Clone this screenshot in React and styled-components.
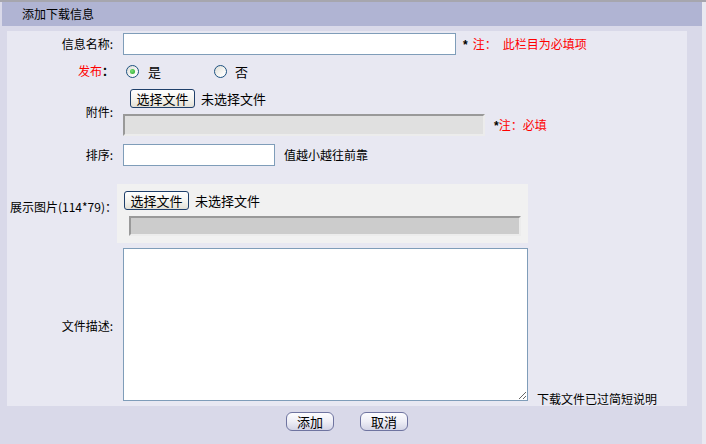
import React from "react";
import styled, { createGlobalStyle } from "styled-components";

const Global = createGlobalStyle`
  html, body { margin: 0; padding: 0; }
  body {
    background: #e9e9f1;
    font-family: "Noto Sans CJK SC", "Liberation Sans", sans-serif;
    font-size: 12px;
    color: #000;
  }
  * { box-sizing: border-box; }
`;

const Page = styled.div`
  width: 706px;
  height: 444px;
  border-top: 2px solid #a6a6ae;
  overflow: hidden;
`;

const Frame = styled.div`
  width: 702px;
  height: 442px;
  background: #d9d9e9;
`;

const Header = styled.div`
  margin-left: 2px;
  height: 24px;
  line-height: 24px;
  padding-left: 20px;
  background: #b0b4d3;
  font-size: 12px;
`;

const Inner = styled.div`
  margin: 5px 15px 0 7px;
  background: #e8e8f2;
  display: flex;
  flex-direction: column;
`;

const Row = styled.div`
  display: grid;
  grid-template-columns: 110px 411px 1fr;
  height: ${(p) => p.$h}px;
  margin-top: ${(p) => p.$mt || 0}px;
`;

const Label = styled.div`
  display: flex;
  align-items: ${(p) => (p.$top ? "flex-start" : "center")};
  justify-content: flex-end;
  padding-right: ${(p) => (p.$pr !== undefined ? p.$pr : 4)}px;
  padding-top: ${(p) => p.$pt || 0}px;
  white-space: nowrap;
  line-height: 16px;
`;

const Red = styled.span`
  color: #ff0000;
`;

const Colon = styled.span`
  font-weight: bold;
`;

const Value = styled.div`
  grid-column: ${(p) => (p.$span ? "2 / 4" : "2 / 3")};
  display: flex;
  flex-direction: ${(p) => (p.$col ? "column" : "row")};
  align-items: ${(p) => (p.$col ? "flex-start" : "center")};
  padding-left: 6px;
  padding-top: ${(p) => p.$pt || 0}px;
`;

const InlineLine = styled.div`
  display: flex;
  align-items: center;
`;

const ImageBox = styled.div`
  grid-column: 2 / 3;
  background: #f1f1f1;
  padding: 7px 0 0 7px;
  display: flex;
  flex-direction: column;
`;

const TextInput = styled.input`
  width: ${(p) => p.$w}px;
  height: 22px;
  border: 1px solid #7f9db9;
  background: #fff;
  padding: 0 3px;
  font-family: inherit;
  font-size: 12px;
  outline: none;
  margin: 0;
`;

const GrayInput = styled.div`
  width: ${(p) => p.$w}px;
  height: ${(p) => p.$h}px;
  margin-left: ${(p) => p.$ml || 0}px;
  background: ${(p) => p.$bg};
  border-style: solid;
  border-width: 2px;
  border-color: #999999 #ececec #ececec #999999;
`;

const Note = styled.span`
  margin-left: ${(p) => p.$ml || 0}px;
  white-space: nowrap;
  line-height: 16px;
`;

const Star = styled.span`
  font-weight: bold;
  font-family: "Liberation Sans", sans-serif;
  margin-right: ${(p) => p.$mr || 0}px;
`;

const Gap = styled.span`
  display: inline-block;
  width: 6px;
`;

const FileLine = styled.div`
  display: flex;
  align-items: center;
  height: 19px;
  margin-left: ${(p) => p.$ml || 0}px;
  margin-bottom: 6px;
`;

const FileButton = styled.span`
  display: inline-flex;
  align-items: center;
  justify-content: center;
  width: 65px;
  height: 19px;
  border: 1px solid #1f3f6a;
  border-radius: 3px;
  background: linear-gradient(#ffffff 0%, #f4f3ee 55%, #e3e0d6 100%);
  font-size: 13px;
  line-height: 17px;
`;

const FileText = styled.span`
  margin-left: 6px;
  font-size: 13px;
`;

const RadioGroup = styled.label`
  display: inline-flex;
  align-items: center;
  margin-left: ${(p) => p.$ml}px;
  font-size: 13px;
`;

const Radio = styled.span`
  position: relative;
  width: 13px;
  height: 13px;
  border-radius: 50%;
  border: 1px solid #1c5180;
  background: linear-gradient(135deg, #dcdcd6 0%, #fbfbf9 70%, #ffffff 100%);
  margin-right: ${(p) => p.$gap}px;
  &::after {
    content: "";
    display: ${(p) => (p.$checked ? "block" : "none")};
    position: absolute;
    left: 3px;
    top: 3px;
    width: 5px;
    height: 5px;
    border-radius: 50%;
    background: radial-gradient(circle at 40% 40%, #7be27b, #21a121);
  }
`;

const TextArea = styled.textarea`
  width: 405px;
  height: 153px;
  border: 1px solid #7f9db9;
  background: #fff;
  margin: 0;
  font-family: inherit;
  outline: none;
`;

const DescNote = styled.div`
  align-self: end;
  padding-left: 9px;
  line-height: 14px;
  white-space: nowrap;
`;

const ButtonBar = styled.div`
  display: flex;
  justify-content: center;
  gap: 26px;
  padding: 6px 15px 0 7px;
`;

const ActionButton = styled.span`
  display: inline-flex;
  align-items: center;
  justify-content: center;
  width: 48px;
  height: 19px;
  border: 1px solid #6f74a0;
  border-radius: 6px;
  background: linear-gradient(#fdfdff 0%, #eeeef6 50%, #d3d4e6 100%);
  font-size: 13px;
`;

export default function App() {
  return (
    <>
      <Global />
      <Page>
        <Frame>
          <Header>添加下载信息</Header>
          <Inner>
            <Row $h={26}>
              <Label>信息名称:</Label>
              <Value $span>
                <TextInput $w={333} />
                <Note $ml={7}>
                  <Star $mr={5}>*</Star>
                  <Red>
                    注：<Gap />此栏目为必填项
                  </Red>
                </Note>
              </Value>
            </Row>
            <Row $h={28}>
              <Label $pr={3}>
                <Red>发布</Red>
                <Colon>：</Colon>
              </Label>
              <Value $span>
                <RadioGroup $ml={3}>
                  <Radio $checked $gap={9} />是
                </RadioGroup>
                <RadioGroup $ml={53}>
                  <Radio $gap={8} />否
                </RadioGroup>
              </Value>
            </Row>
            <Row $h={56}>
              <Label $top $pt={19}>附件:</Label>
              <Value $span $col $pt={4}>
                <FileLine $ml={7}>
                  <FileButton>选择文件</FileButton>
                  <FileText>未选择文件</FileText>
                </FileLine>
                <InlineLine>
                  <GrayInput $w={362} $h={22} $bg="#e0e0e0" />
                  <Note $ml={9}>
                    <Star>*</Star>
                    <Red>注：必填</Red>
                  </Note>
                </InlineLine>
              </Value>
            </Row>
            <Row $h={27}>
              <Label>排序:</Label>
              <Value $span>
                <TextInput $w={152} />
                <Note $ml={9}>值越小越往前靠</Note>
              </Value>
            </Row>
            <Row $h={59} $mt={16}>
              <Label $top $pt={15} $pr={0}>
                展示图片(114*79)：
              </Label>
              <ImageBox>
                <FileLine>
                  <FileButton>选择文件</FileButton>
                  <FileText>未选择文件</FileText>
                </FileLine>
                <GrayInput $w={392} $h={20} $ml={5} $bg="#cccccc" />
              </ImageBox>
            </Row>
            <Row $h={158} $mt={5}>
              <Label $top $pt={70}>文件描述:</Label>
              <Value $col>
                <TextArea />
              </Value>
              <DescNote>下载文件已过简短说明</DescNote>
            </Row>
          </Inner>
          <ButtonBar>
            <ActionButton>添加</ActionButton>
            <ActionButton>取消</ActionButton>
          </ButtonBar>
        </Frame>
      </Page>
    </>
  );
}
